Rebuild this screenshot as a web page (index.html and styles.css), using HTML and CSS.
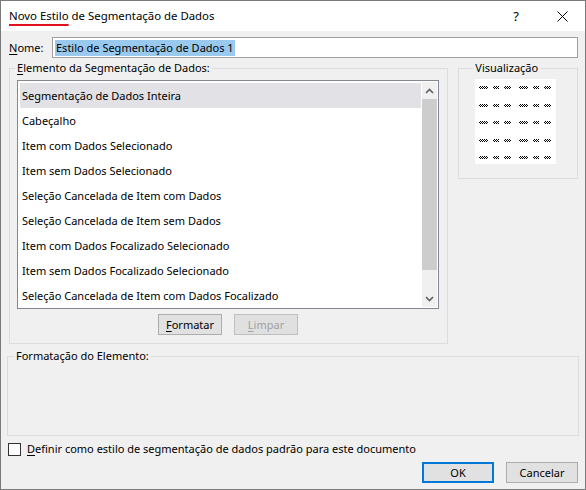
FILE: index.html
```html
<!DOCTYPE html>
<html lang="pt">
<head>
<meta charset="utf-8">
<title>Novo Estilo de Segmentação de Dados</title>
<link rel="stylesheet" href="styles.css">
</head>
<body>
<div class="window">
  <div class="titlebar">
    <div class="title"><span class="mark">Novo Estilo</span> de Segmentação de Dados</div>
    <div class="tb-help">?</div>
    <div class="tb-close">
      <svg width="11" height="11" viewBox="0 0 11 11"><path d="M0.5 0.5 L10.5 10.5 M10.5 0.5 L0.5 10.5" stroke="#000" stroke-width="1" fill="none"/></svg>
    </div>
  </div>
  <div class="content">
    <div class="name-row">
      <label class="name-label"><u>N</u>ome:</label>
      <div class="name-input"><span class="sel">Estilo de Segmentação de Dados 1</span></div>
    </div>
    <div class="middle">
      <fieldset class="group group-elem">
        <legend><u>E</u>lemento da Segmentação de Dados:</legend>
        <div class="listbox">
          <div class="rows">
            <div class="row active">Segmentação de Dados Inteira</div>
            <div class="row">Cabeçalho</div>
            <div class="row">Item com Dados Selecionado</div>
            <div class="row">Item sem Dados Selecionado</div>
            <div class="row">Seleção Cancelada de Item com Dados</div>
            <div class="row">Seleção Cancelada de Item sem Dados</div>
            <div class="row">Item com Dados Focalizado Selecionado</div>
            <div class="row">Item sem Dados Focalizado Selecionado</div>
            <div class="row">Seleção Cancelada de Item com Dados Focalizado</div>
          </div>
          <div class="scrollbar">
            <div class="sb-btn">
              <svg width="9" height="6" viewBox="0 0 9 6"><path d="M1 5 L4.5 1.5 L8 5" stroke="#606060" stroke-width="1.6" fill="none"/></svg>
            </div>
            <div class="sb-thumb"></div>
            <div class="sb-track"></div>
            <div class="sb-btn">
              <svg width="9" height="6" viewBox="0 0 9 6"><path d="M1 1 L4.5 4.5 L8 1" stroke="#606060" stroke-width="1.6" fill="none"/></svg>
            </div>
          </div>
        </div>
        <div class="elem-buttons">
          <div class="btn"><u>F</u>ormatar</div>
          <div class="btn disabled"><u>L</u>impar</div>
        </div>
      </fieldset>
      <fieldset class="group group-prev">
        <legend>Visualização</legend>
        <div class="preview">
          <div class="pv-row"><i class="d9"></i><i class="d7"></i><i class="d8"></i><i class="d9 gap"></i><i class="d7"></i><i class="d8"></i></div>
          <div class="pv-row"><i class="d9"></i><i class="d7"></i><i class="d8"></i><i class="d9 gap"></i><i class="d7"></i><i class="d8"></i></div>
          <div class="pv-row"><i class="d9"></i><i class="d7"></i><i class="d8"></i><i class="d9 gap"></i><i class="d7"></i><i class="d8"></i></div>
          <div class="pv-row"><i class="d9"></i><i class="d7"></i><i class="d8"></i><i class="d9 gap"></i><i class="d7"></i><i class="d8"></i></div>
          <div class="pv-row"><i class="d9"></i><i class="d7"></i><i class="d8"></i><i class="d9 gap"></i><i class="d7"></i><i class="d8"></i></div>
        </div>
      </fieldset>
    </div>
    <fieldset class="group group-format">
      <legend>Formatação do Elemento:</legend>
    </fieldset>
    <div class="check-row">
      <span class="checkbox"></span>
      <span class="check-label"><u>D</u>efinir como estilo de segmentação de dados padrão para este documento</span>
    </div>
    <div class="dialog-buttons">
      <div class="btn btn-wide default">OK</div>
      <div class="btn btn-wide">Cancelar</div>
    </div>
  </div>
</div>
</body>
</html>
```
FILE: styles.css
```css
* { box-sizing: border-box; }
html, body { margin: 0; padding: 0; }
body {
  width: 586px;
  height: 490px;
  font-family: "Noto Sans", "Segoe UI", "Liberation Sans", sans-serif;
  font-size: 11px;
  color: #000;
  background: #f0f0f0;
}
u { text-decoration-thickness: 1px; text-underline-offset: 2px; }

.window {
  width: 586px;
  height: 490px;
  border: 1px solid #7a7a7a;
  background: #f0f0f0;
  display: flex;
  flex-direction: column;
}

.titlebar {
  height: 30px;
  background: #fff;
  display: flex;
  align-items: center;
  flex: none;
}
.title {
  flex: 1;
  padding-left: 8px;
  font-size: 11.4px;
  line-height: 16px;
}
.mark {
  text-decoration: underline;
  text-decoration-color: #e0101e;
  text-decoration-thickness: 2px;
  text-underline-offset: 4px;
}
.tb-help {
  width: 46px;
  text-align: center;
  font-size: 13px;
  line-height: 16px;
}
.tb-close {
  width: 46px;
  display: flex;
  justify-content: center;
  align-items: center;
  height: 30px;
}

.content {
  flex: 1;
  display: flex;
  flex-direction: column;
  padding: 0 7px 0 6px;
}

.name-row {
  display: flex;
  align-items: center;
  margin-top: 6px;
  height: 21px;
}
.name-label {
  width: 45px;
  padding-left: 2px;
  line-height: 16px;
}
.name-input {
  flex: 1;
  height: 21px;
  background: #fff;
  border: 1px solid #a0a0a0;
  padding: 1px 2px;
  display: flex;
  align-items: center;
}
.sel {
  background: #99c9ef;
  line-height: 16px;
  padding: 0 1px;
}

.middle {
  display: flex;
  gap: 10px;
  margin-top: 2px;
  padding-left: 2px;
  align-items: flex-start;
}

.group {
  margin: 0;
  border: 1px solid #dcdcdc;
  min-width: 0;
}
.group legend {
  padding: 0 2px;
  margin-left: -2px;
  line-height: 16px;
}

.group-elem {
  width: 441px;
  height: 284px;
  padding: 4px 10px 0 7px;
  display: flex;
  flex-direction: column;
}
.listbox {
  width: 422px;
  height: 229px;
  border: 1px solid #828790;
  background: #fff;
  display: flex;
  padding: 1px 1px 1px 2px;
}
.rows {
  flex: 1;
  display: flex;
  flex-direction: column;
  padding-top: 1px;
}
.row {
  height: 25px;
  line-height: 26px;
  padding-left: 2px;
  white-space: nowrap;
}
.row.active { background: #e1e1e6; }

.scrollbar {
  width: 15px;
  display: flex;
  flex-direction: column;
  background: #f0f0f0;
  margin-left: 1px;
}
.sb-btn {
  height: 17px;
  display: flex;
  align-items: center;
  justify-content: center;
  flex: none;
}
.sb-thumb {
  height: 171px;
  background: #cdcdcd;
  flex: none;
}
.sb-track { flex: 1; }

.elem-buttons {
  display: flex;
  justify-content: center;
  gap: 12px;
  margin-top: 5px;
  width: 422px;
}

.btn {
  width: 64px;
  height: 21px;
  border: 1px solid #adadad;
  background: #e1e1e1;
  display: flex;
  align-items: center;
  justify-content: center;
  line-height: 16px;
}
.btn.disabled {
  color: #a0a0a0;
  border-color: #bfbfbf;
  background: #e0e0e0;
}
.btn-wide { width: 72px; height: 21px; }
.btn.default { border: 2px solid #0078d7; }

.group-prev {
  width: 120px;
  height: 119px;
  padding: 3px 8px 0 16px;
}
.preview {
  width: 81px;
  height: 85px;
  background: #fff;
  padding: 7px 0 0 4px;
  display: flex;
  flex-direction: column;
  gap: 14.5px;
}
.pv-row {
  display: flex;
  height: 3px;
}
.pv-row i {
  display: block;
  height: 3px;
  margin-right: 5px;
  background: repeating-conic-gradient(#000 0 25%, #fff 0 50%) 0 0 / 2px 2px;
}
.pv-row i.d9 { width: 9px; }
.pv-row i.d7 { width: 6px; }
.pv-row i.d8 { width: 7px; }
.pv-row i.gap { margin-left: 3px; }

.group-format {
  margin-top: 4px;
  height: 88px;
  width: 572px;
  padding: 0 8px;
}

.check-row {
  display: flex;
  align-items: center;
  margin-top: 6px;
  height: 14px;
  padding-left: 1px;
}
.checkbox {
  width: 13px;
  height: 13px;
  border: 1px solid #333;
  background: #fff;
  margin-right: 6px;
  flex: none;
}
.check-label { line-height: 16px; white-space: nowrap; }

.dialog-buttons {
  display: flex;
  justify-content: flex-end;
  gap: 12px;
  margin-top: 6px;
  padding-right: 0;
}
```
